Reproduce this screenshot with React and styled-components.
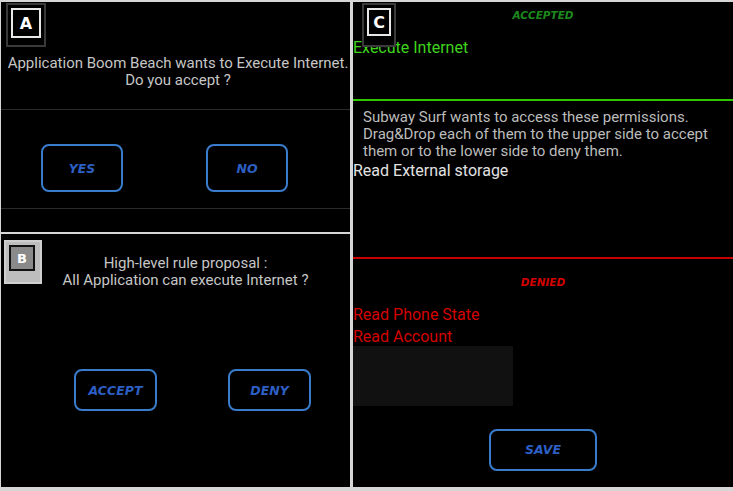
import React from 'react';
import styled, { createGlobalStyle } from 'styled-components';

const GlobalStyle = createGlobalStyle`
  html, body {
    margin: 0;
    padding: 0;
    background: #d6d6d6;
  }
  body {
    font-family: Roboto, "Noto Sans", "Liberation Sans", sans-serif;
  }
`;

const Page = styled.div`
  width: 733px;
  height: 491px;
  box-sizing: border-box;
  padding: 2px 0 4px 1px;
  display: grid;
  grid-template-columns: 349px 380px;
  column-gap: 3px;
  background: #d6d6d6;
`;

const LeftColumn = styled.div`
  display: flex;
  flex-direction: column;
  gap: 2px;
`;

const Screen = styled.div`
  position: relative;
  background: #000;
  height: ${(p) => p.$height}px;
  display: flex;
  flex-direction: column;
  overflow: hidden;
`;

/* the little letter tile in the corner of each screen */
const Tag = styled.div`
  position: absolute;
  left: ${(p) => p.$left}px;
  top: ${(p) => p.$top}px;
  width: ${(p) => p.$w}px;
  height: ${(p) => p.$h}px;
  box-sizing: border-box;
  border: 2px solid ${(p) => (p.$light ? '#cfcfcf' : '#3a3a3a')};
  background: ${(p) => (p.$light ? '#bdbdbd' : '#000')};
  display: flex;
  align-items: flex-start;
  justify-content: flex-start;
  padding: 3px;
`;

const TagInner = styled.div`
  width: ${(p) => p.$w}px;
  height: ${(p) => p.$h}px;
  box-sizing: border-box;
  border: 2px solid ${(p) => (p.$light ? '#111' : '#e8e8e8')};
  background: ${(p) => (p.$light ? '#8a8a8a' : '#000')};
  display: flex;
  align-items: center;
  justify-content: center;
  color: #fff;
  font-family: "DejaVu Sans", sans-serif;
  font-weight: bold;
  font-size: ${(p) => (p.$light ? 13 : 16)}px;
`;

const Message = styled.div`
  text-align: center;
  color: #c6c6c6;
  font-size: 15px;
  line-height: 17px;
  white-space: nowrap;
  padding-left: ${(p) => p.$indent || 0}px;
  margin-top: ${(p) => p.$top}px;
`;

const Rule = styled.div`
  height: 1px;
  background: #2b2b2b;
  margin-top: ${(p) => p.$top || 0}px;
`;

const ButtonRow = styled.div`
  display: flex;
  gap: ${(p) => p.$gap}px;
  padding-left: ${(p) => p.$left}px;
  margin-top: ${(p) => p.$top}px;
  justify-content: ${(p) => (p.$center ? 'center' : 'flex-start')};
`;

const Button = styled.button`
  width: ${(p) => p.$w}px;
  height: ${(p) => p.$h}px;
  box-sizing: border-box;
  background: #000;
  border: 2px solid #3a7ccc;
  border-radius: 8px;
  color: #2d5fc4;
  font-family: "DejaVu Sans", sans-serif;
  font-style: italic;
  font-weight: bold;
  font-size: 12.5px;
  padding: 0;
`;

const Zone = styled.div`
  display: flex;
  flex-direction: column;
  height: ${(p) => p.$height}px;
`;

const ZoneTitle = styled.div`
  text-align: center;
  font-family: "DejaVu Sans", sans-serif;
  font-style: italic;
  font-weight: bold;
  font-size: 10.5px;
  line-height: 15px;
  color: ${(p) => p.$color};
  margin-top: ${(p) => p.$top}px;
`;

const Permission = styled.div`
  font-size: 16px;
  line-height: 22px;
  white-space: nowrap;
  color: ${(p) => p.$color};
  margin-top: ${(p) => p.$top || 0}px;
`;

const Divider = styled.div`
  height: 2px;
  background: ${(p) => p.$color};
`;

const Hint = styled.div`
  color: #bcbcbc;
  font-size: 15px;
  line-height: 17px;
  white-space: nowrap;
  padding: 8px 0 0 10px;
`;

const DropSlot = styled.div`
  width: 160px;
  height: 60px;
  background: #111;
  margin-top: -2px;
`;

export default function App() {
  return (
    <>
      <GlobalStyle />
      <Page>
        <LeftColumn>
          <Screen $height={230}>
            <Tag $left={5} $top={1} $w={40} $h={44}>
              <TagInner $w={30} $h={30}>A</TagInner>
            </Tag>
            <Message $top={53} $indent={5}>
              Application Boom Beach wants to Execute Internet.
              <br />
              Do you accept ?
            </Message>
            <Rule $top={20} />
            <ButtonRow $left={40} $gap={83} $top={34}>
              <Button $w={82} $h={48}>YES</Button>
              <Button $w={82} $h={48}>NO</Button>
            </ButtonRow>
            <Rule $top={16} />
          </Screen>

          <Screen $height={253}>
            <Tag $left={3} $top={6} $w={38} $h={44} $light>
              <TagInner $w={26} $h={26} $light>B</TagInner>
            </Tag>
            <Message $top={21} $indent={20}>
              High-level rule proposal :
              <br />
              All Application can execute Internet ?
            </Message>
            <ButtonRow $left={73} $gap={71} $top={80}>
              <Button $w={83} $h={42}>ACCEPT</Button>
              <Button $w={83} $h={42}>DENY</Button>
            </ButtonRow>
          </Screen>
        </LeftColumn>

        <Screen $height={485}>
          <Tag $left={9} $top={1} $w={34} $h={44}>
            <TagInner $w={24} $h={28}>C</TagInner>
          </Tag>
          <Zone $height={97}>
            <ZoneTitle $color="#1e8a1e" $top={6}>ACCEPTED</ZoneTitle>
            <Permission $color="#3fd41c" $top={14}>Execute Internet</Permission>
          </Zone>
          <Divider $color="#2fc800" />
          <Zone $height={157}>
            <Hint>
              Subway Surf wants to access these permissions.
              <br />
              Drag&amp;Drop each of them to the upper side to accept
              <br />
              them or to the lower side to deny them.
            </Hint>
            <Permission $color="#e2e2e2">Read External storage</Permission>
          </Zone>
          <Divider $color="#c80000" />
          <Zone $height={229}>
            <ZoneTitle $color="#d40000" $top={16}>DENIED</ZoneTitle>
            <Permission $color="#d40000" $top={14}>Read Phone State</Permission>
            <Permission $color="#d40000">Read Account</Permission>
            <DropSlot />
            <ButtonRow $left={0} $gap={0} $top={23} $center>
              <Button $w={108} $h={42}>SAVE</Button>
            </ButtonRow>
          </Zone>
        </Screen>
      </Page>
    </>
  );
}
